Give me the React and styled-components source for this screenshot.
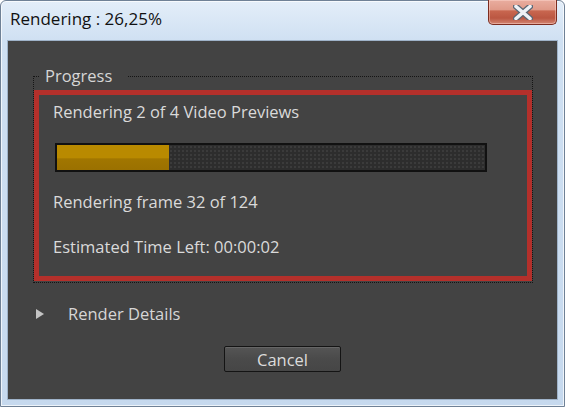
import React from "react";
import styled, { createGlobalStyle } from "styled-components";

const Global = createGlobalStyle`
  html, body { margin: 0; padding: 0; background: #ffffff; }
  body { font-family: "Open Sans", "Noto Sans", sans-serif; }
`;

const Window = styled.div`
  box-sizing: border-box;
  width: 565px;
  height: 407px;
  border: 1px solid #6f8196;
  border-radius: 6px 6px 0 0;
  background: linear-gradient(180deg, #e3eef9 0px, #cfe0f2 40px, #c6d9ee 100%);
  display: flex;
  flex-direction: column;
  padding: 0 7px 7px 7px;
  box-shadow: inset 0 0 0 1px rgba(255,255,255,0.7);
`;

const TitleBar = styled.div`
  height: 39px;
  display: flex;
  align-items: flex-start;
  justify-content: space-between;
`;

const Title = styled.div`
  margin-top: 7px;
  margin-left: 2px;
  font-family: "Open Sans", sans-serif;
  font-size: 17px;
  line-height: 22px;
  color: #111;
`;

const CloseButton = styled.div`
  box-sizing: border-box;
  margin-top: -1px;
  width: 69px;
  height: 25px;
  border: 1px solid #7c2c1f;
  border-top: none;
  border-radius: 0 0 5px 5px;
  background: linear-gradient(180deg, #e9ad9f 0%, #e09a89 40%, #c8664f 46%, #bb5742 75%, #d38571 100%);
  box-shadow: inset 0 0 0 1px rgba(255,220,210,0.45);
  display: flex;
  align-items: center;
  justify-content: center;
`;

const Content = styled.div`
  flex: 1;
  background: #434343;
  display: flex;
  flex-direction: column;
  border: 1px solid #9fb3c9;
  margin: 0 -1px -1px -1px;
`;

const Fieldset = styled.div`
  position: relative;
  margin: 35px 24px 0 25px;
  border: 1px dotted #141414;
  padding: 13px 0 1px 0;
`;

const Legend = styled.div`
  position: absolute;
  top: -12px;
  left: 5px;
  padding: 0 15px 0 6px;
  background: #434343;
  font-size: 16.5px;
  line-height: 22px;
  color: #d6d6d6;
`;

const Highlight = styled.div`
  border: 5px solid #b4302b;
  padding: 6px 14px 18px 14px;
  display: flex;
  flex-direction: column;
`;

const Line = styled.div`
  font-size: 16.5px;
  line-height: 22px;
  color: #dadada;
  margin-top: ${(p) => p.$gap || 0}px;
`;

const Track = styled.div`
  box-sizing: border-box;
  margin: 20px 0 0 2px;
  width: 432px;
  height: 29px;
  border: 2px solid #111;
  background-color: #2d2d2d;
  background-image: radial-gradient(#3b3b3b 0.8px, transparent 1px);
  background-size: 4px 4px;
  display: flex;
`;

const Fill = styled.div`
  height: 100%;
  background: linear-gradient(180deg, #b98a00 0%, #b98a00 50%, #a17600 56%, #9b7100 100%);
`;

const DetailsRow = styled.div`
  margin: 20px 0 0 28px;
  display: flex;
  align-items: center;
  height: 22px;
`;

const Triangle = styled.div`
  width: 0;
  height: 0;
  border-top: 5px solid transparent;
  border-bottom: 5px solid transparent;
  border-left: 8px solid #c4c4c4;
  margin-right: 24px;
`;

const DetailsLabel = styled.div`
  font-size: 16.5px;
  line-height: 22px;
  color: #d6d6d6;
`;

const ButtonRow = styled.div`
  display: flex;
  justify-content: center;
  margin-top: 21px;
`;

const Button = styled.div`
  box-sizing: border-box;
  width: 117px;
  height: 26px;
  border: 1px solid #141414;
  border-radius: 2px;
  background: linear-gradient(180deg, #555 0%, #4a4a4a 50%, #464646 100%);
  box-shadow: inset 0 1px 0 #666;
  display: flex;
  align-items: center;
  justify-content: center;
  font-size: 16.5px;
  color: #dcdcdc;
`;

export default function App() {
  const progress = 26.25;
  return (
    <>
      <Global />
      <Window>
        <TitleBar>
          <Title>Rendering : 26,25%</Title>
          <CloseButton>
            <svg width="20" height="15" viewBox="0 0 20 15">
              <path d="M3 1.5 L17 13.5 M17 1.5 L3 13.5" stroke="#5a6674" strokeWidth="6" strokeLinecap="round" />
              <path d="M3 1.5 L17 13.5 M17 1.5 L3 13.5" stroke="#eef1f6" strokeWidth="3.6" strokeLinecap="round" />
            </svg>
          </CloseButton>
        </TitleBar>
        <Content>
          <Fieldset>
            <Legend>Progress</Legend>
            <Highlight>
              <Line>Rendering 2 of 4 Video Previews</Line>
              <Track>
                <Fill style={{ width: `${progress}%` }} />
              </Track>
              <Line $gap={19}>Rendering frame 32 of 124</Line>
              <Line $gap={23}>Estimated Time Left: 00:00:02</Line>
            </Highlight>
          </Fieldset>
          <DetailsRow>
            <Triangle />
            <DetailsLabel>Render Details</DetailsLabel>
          </DetailsRow>
          <ButtonRow>
            <Button>Cancel</Button>
          </ButtonRow>
        </Content>
      </Window>
    </>
  );
}
